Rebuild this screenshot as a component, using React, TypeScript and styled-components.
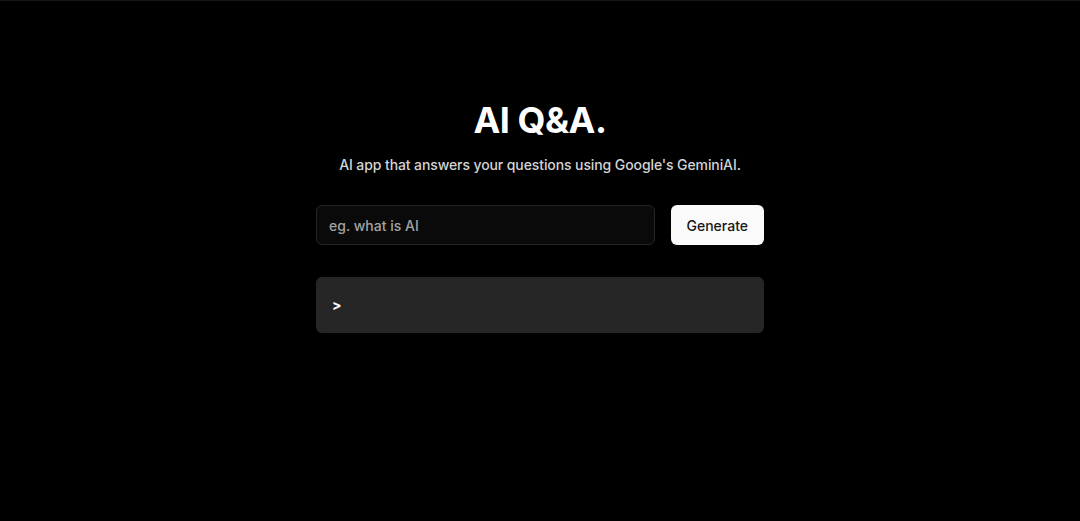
import React, { useState } from "react";
import styled, { createGlobalStyle } from "styled-components";

const GlobalStyle = createGlobalStyle`
  html, body {
    margin: 0;
    padding: 0;
    background: #000;
  }
  body {
    font-family: Inter, "Liberation Sans", Arial, sans-serif;
    color: #fff;
    -webkit-font-smoothing: antialiased;
  }
`;

const Page = styled.main`
  min-height: 521px;
  box-sizing: border-box;
  border-top: 1px solid #161616;
  background: #000;
  display: flex;
  flex-direction: column;
  align-items: center;
  padding-top: 97px;
`;

const Wrapper = styled.div`
  width: 448px;
  display: flex;
  flex-direction: column;
  align-items: center;
`;

const Title = styled.h1`
  margin: 0;
  font-size: 36px;
  line-height: 44px;
  font-weight: 700;
  letter-spacing: -0.5px;
  color: #fff;
`;

const Subtitle = styled.p`
  margin: 13px 0 0;
  font-size: 14px;
  line-height: 20px;
  font-weight: 500;
  letter-spacing: -0.1px;
  color: #d4d4d4;
`;

const Form = styled.form`
  width: 100%;
  margin-top: 30px;
  display: flex;
  gap: 16px;
`;

const Input = styled.input`
  flex: 1;
  height: 40px;
  box-sizing: border-box;
  padding: 0 12px;
  background: #0a0a0a;
  border: 1px solid #262626;
  border-radius: 6px;
  color: #fff;
  font-family: inherit;
  font-size: 14px;
  outline: none;
  &::placeholder {
    color: #a3a3a3;
    font-weight: 500;
  }
`;

const Button = styled.button`
  height: 40px;
  padding: 0 16px;
  background: #fafafa;
  color: #171717;
  border: none;
  border-radius: 6px;
  font-family: inherit;
  font-size: 14px;
  font-weight: 500;
  cursor: pointer;
`;

const Output = styled.div`
  width: 100%;
  margin-top: 32px;
  min-height: 56px;
  box-sizing: border-box;
  padding: 18px 16px;
  background: #262626;
  border-radius: 6px;
  font-size: 14px;
  line-height: 20px;
  font-weight: 700;
  color: #fff;
`;

export default function App() {
  const [question, setQuestion] = useState("");

  return (
    <>
      <GlobalStyle />
      <Page>
        <Wrapper>
          <Title>AI Q&amp;A.</Title>
          <Subtitle>AI app that answers your questions using Google's GeminiAI.</Subtitle>
          <Form onSubmit={(e) => e.preventDefault()}>
            <Input
              type="text"
              placeholder="eg. what is AI"
              value={question}
              onChange={({ target }) => setQuestion(target.value)}
            />
            <Button type="submit">Generate</Button>
          </Form>
          <Output>&gt;</Output>
        </Wrapper>
      </Page>
    </>
  );
}
